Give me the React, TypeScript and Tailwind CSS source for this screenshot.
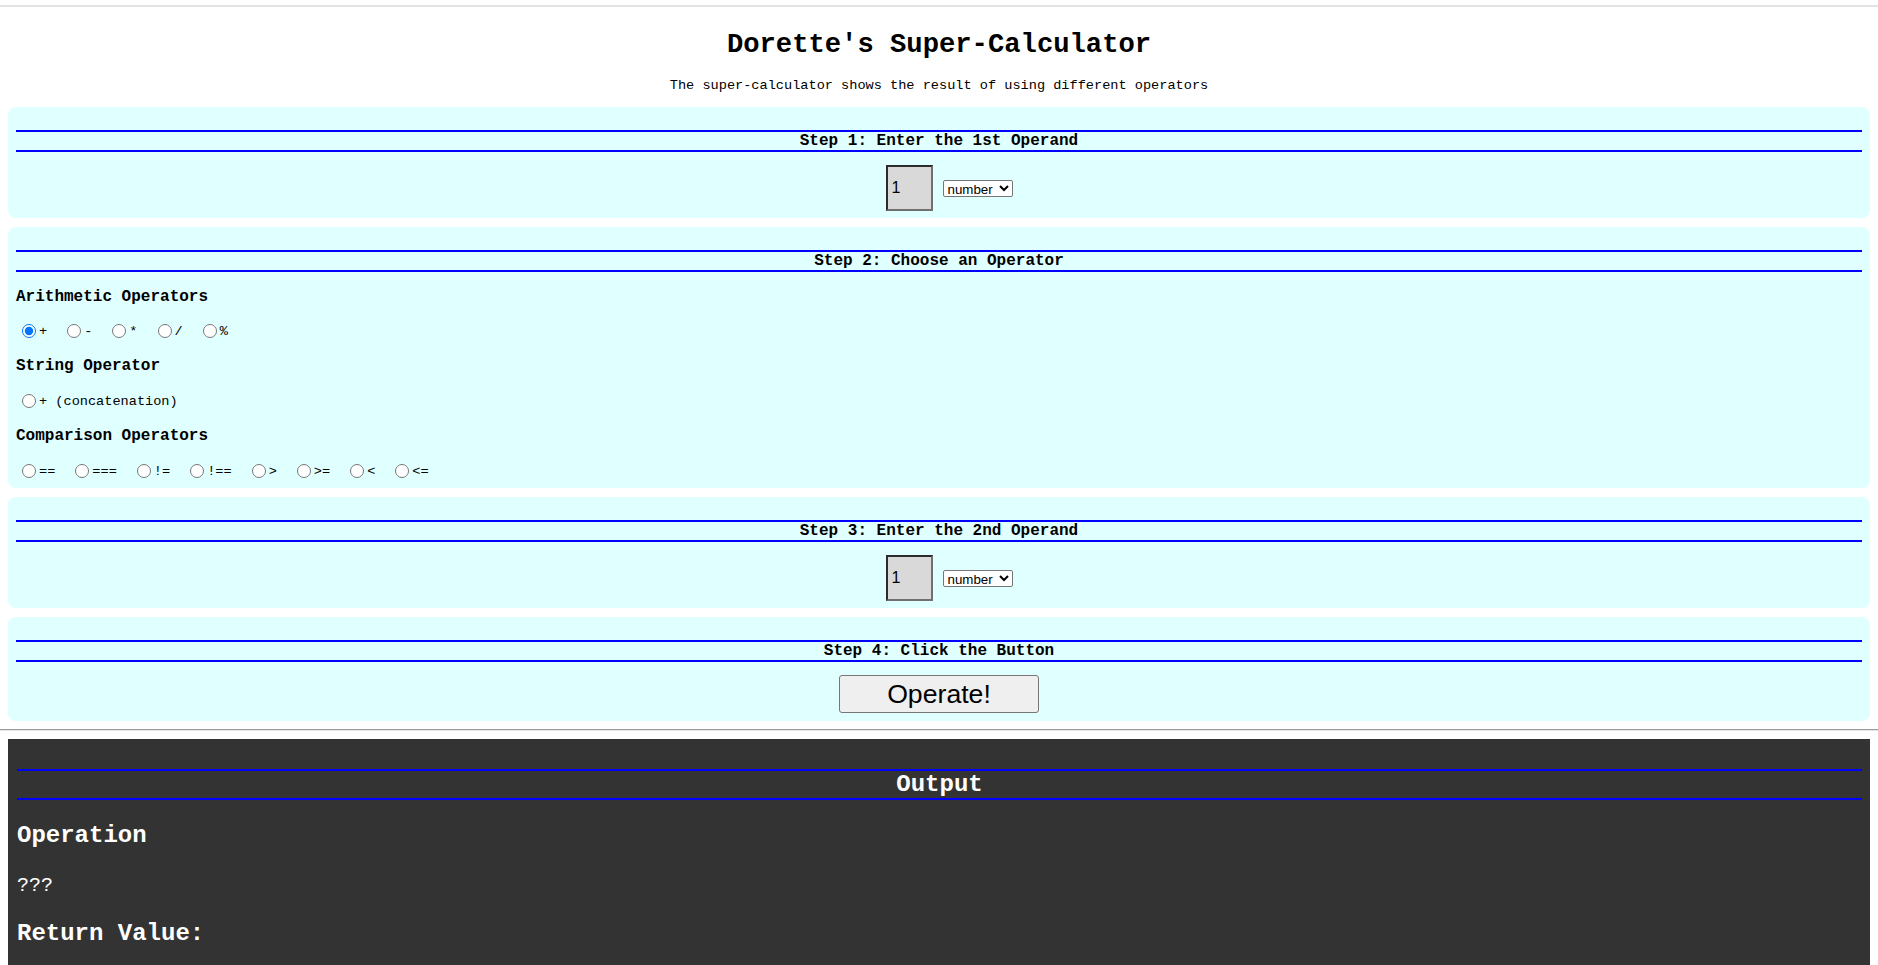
import type { ReactNode } from "react";

const arithmetic = ["+", "-", "*", "/", "%"];
const comparison = ["==", "===", "!=", "!==", ">", ">=", "<", "<="];

function Radio({ label, name, checked }: { label: string; name: string; checked?: boolean }) {
  return (
    <label className="mr-[14px] inline-flex items-center">
      <input
        type="radio"
        name={name}
        defaultChecked={checked}
        className="m-0 ml-[6px] mr-[3px] h-[14px] w-[14px]"
      />
      <span className="whitespace-pre text-[13.6px] leading-[15px]">{label}</span>
    </label>
  );
}

function Step({ title, last, children }: { title: string; last?: boolean; children: ReactNode }) {
  return (
    <section
      className={
        last
          ? "rounded-[8px] bg-[#e0ffff] px-[8px] pt-[7px] pb-[8px]"
          : "rounded-[8px] bg-[#e0ffff] px-[8px] pt-[7px] pb-[7px]"
      }
    >
      <h3 className="mt-[16px] border-y-2 border-[#0000ff] text-center text-[16px] font-bold leading-[18px]">
        {title}
      </h3>
      {children}
    </section>
  );
}

function Operand() {
  return (
    <div className="mt-[13px] flex items-center justify-center pl-[20px]">
      <input
        defaultValue="1"
        className="h-[46px] w-[47px] border-2 border-t-[#2b2b2b] border-l-[#2b2b2b] border-r-[#707070] border-b-[#707070] bg-[#d9d9d9] pl-[4px] font-['Arial','Liberation_Sans',sans-serif] text-[16px] text-black outline-none"
      />
      <select className="ml-[10px] h-[17px] rounded-[2px] border border-[#767676] bg-white font-['Arial','Liberation_Sans',sans-serif] text-[13.33px] text-black">
        <option>number</option>
        <option>string</option>
        <option>boolean</option>
      </select>
    </div>
  );
}

function GroupTitle({ children }: { children: ReactNode }) {
  return <h4 className="mt-[16px] text-[16px] font-bold leading-[18px]">{children}</h4>;
}

export default function App() {
  return (
    <div className="min-h-screen bg-white font-['Courier_New','Liberation_Mono',monospace] text-black">
      <div className="h-[5px]" />
      <div className="h-[2px] bg-[#e2e2e2]" />

      <h1 className="mt-[22px] text-center text-[27.2px] font-bold leading-[31px]">
        Dorette's Super-Calculator
      </h1>
      <p className="mt-[18px] text-center text-[13.6px] leading-[15px]">
        The super-calculator shows the result of using different operators
      </p>

      <div className="mx-[8px] mt-[14px] flex flex-col gap-[9px]">
        <Step title="Step 1: Enter the 1st Operand">
          <Operand />
        </Step>

        <Step title="Step 2: Choose an Operator">
          <GroupTitle>Arithmetic Operators</GroupTitle>
          <div className="mt-[15px] flex h-[20px] items-center">
            {arithmetic.map((op, i) => (
              <Radio key={op} name="op" label={op} checked={i === 0} />
            ))}
          </div>
          <GroupTitle>String Operator</GroupTitle>
          <div className="mt-[16px] flex h-[20px] items-center">
            <Radio name="op" label="+ (concatenation)" />
          </div>
          <GroupTitle>Comparison Operators</GroupTitle>
          <div className="mt-[16px] flex h-[20px] items-center">
            {comparison.map((op) => (
              <Radio key={op} name="op" label={op} />
            ))}
          </div>
        </Step>

        <Step title="Step 3: Enter the 2nd Operand">
          <Operand />
        </Step>

        <Step title="Step 4: Click the Button" last>
          <div className="mt-[13px] flex justify-center">
            <button className="h-[38px] w-[200px] rounded-[3px] border border-[#767676] bg-[#efefef] font-['Arial','Liberation_Sans',sans-serif] text-[26.67px] leading-none text-black">
              Operate!
            </button>
          </div>
        </Step>
      </div>

      <div className="mt-[8px] border-t border-b border-t-[#9a9a9a] border-b-[#e6e6e6]" />

      <section className="mx-[8px] mt-[8px] bg-[#333333] pt-[8px] pr-[8px] pb-[60px] pl-[9px] text-white">
        <h2 className="mt-[22px] border-y-2 border-[#0000ff] text-center text-[24px] font-bold leading-[27px]">
          Output
        </h2>
        <h3 className="mt-[22px] text-[24px] font-bold leading-[27px]">Operation</h3>
        <p className="mt-[25px] text-[20px] leading-[23px]">???</p>
        <h3 className="mt-[23px] text-[24px] font-bold leading-[27px]">Return Value:</h3>
      </section>
    </div>
  );
}
